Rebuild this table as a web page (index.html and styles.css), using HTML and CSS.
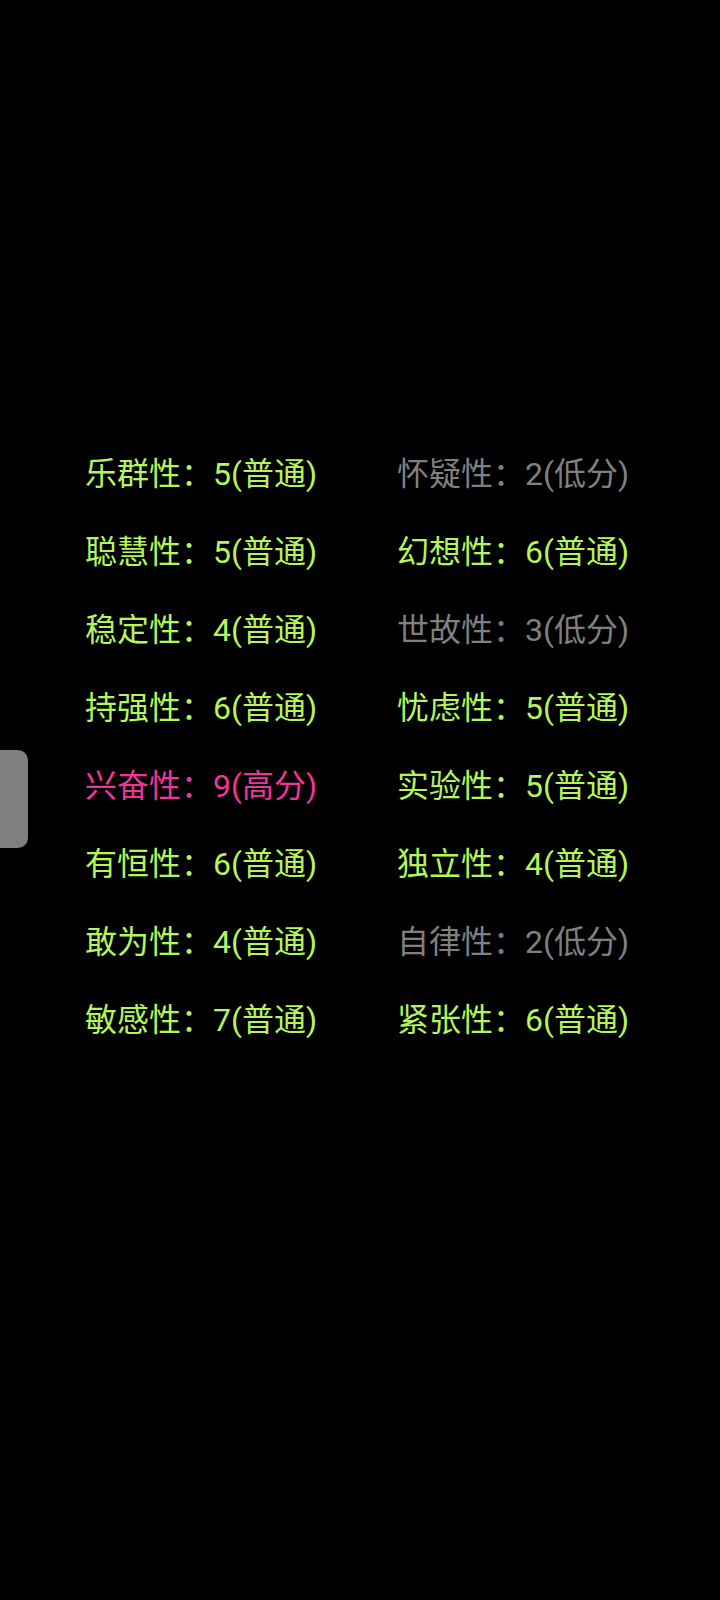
FILE: index.html
```html
<!DOCTYPE html>
<html lang="zh-CN">
<head>
<meta charset="utf-8">
<link rel="stylesheet" href="styles.css">
</head>
<body>
<div class="screen">
  <div class="side-tab"></div>
  <div class="grid">
    <div class="item normal">乐群性：5(普通)</div>
    <div class="item low">怀疑性：2(低分)</div>
    <div class="item normal">聪慧性：5(普通)</div>
    <div class="item normal">幻想性：6(普通)</div>
    <div class="item normal">稳定性：4(普通)</div>
    <div class="item low">世故性：3(低分)</div>
    <div class="item normal">持强性：6(普通)</div>
    <div class="item normal">忧虑性：5(普通)</div>
    <div class="item high">兴奋性：9(高分)</div>
    <div class="item normal">实验性：5(普通)</div>
    <div class="item normal">有恒性：6(普通)</div>
    <div class="item normal">独立性：4(普通)</div>
    <div class="item normal">敢为性：4(普通)</div>
    <div class="item low">自律性：2(低分)</div>
    <div class="item normal">敏感性：7(普通)</div>
    <div class="item normal">紧张性：6(普通)</div>
  </div>
</div>
</body>
</html>
```

FILE: styles.css
```css
html, body {
  margin: 0;
  padding: 0;
  background: #000;
}
.screen {
  position: relative;
  width: 720px;
  height: 1600px;
  background: #000;
  overflow: hidden;
}
.side-tab {
  position: absolute;
  left: -12px;
  top: 750px;
  width: 40px;
  height: 98px;
  background: #7f7f7f;
  border-radius: 10px;
}
.grid {
  display: grid;
  grid-template-columns: 312px 312px;
  grid-auto-rows: 78px;
  padding: 435px 0 0 85px;
}
.item {
  font-family: "Roboto", "Noto Sans CJK SC", sans-serif;
  font-size: 32px;
  line-height: 78px;
  white-space: nowrap;
}
.normal { color: #b4f55a; }
.low { color: #808080; }
.high { color: #ee3696; }
```
